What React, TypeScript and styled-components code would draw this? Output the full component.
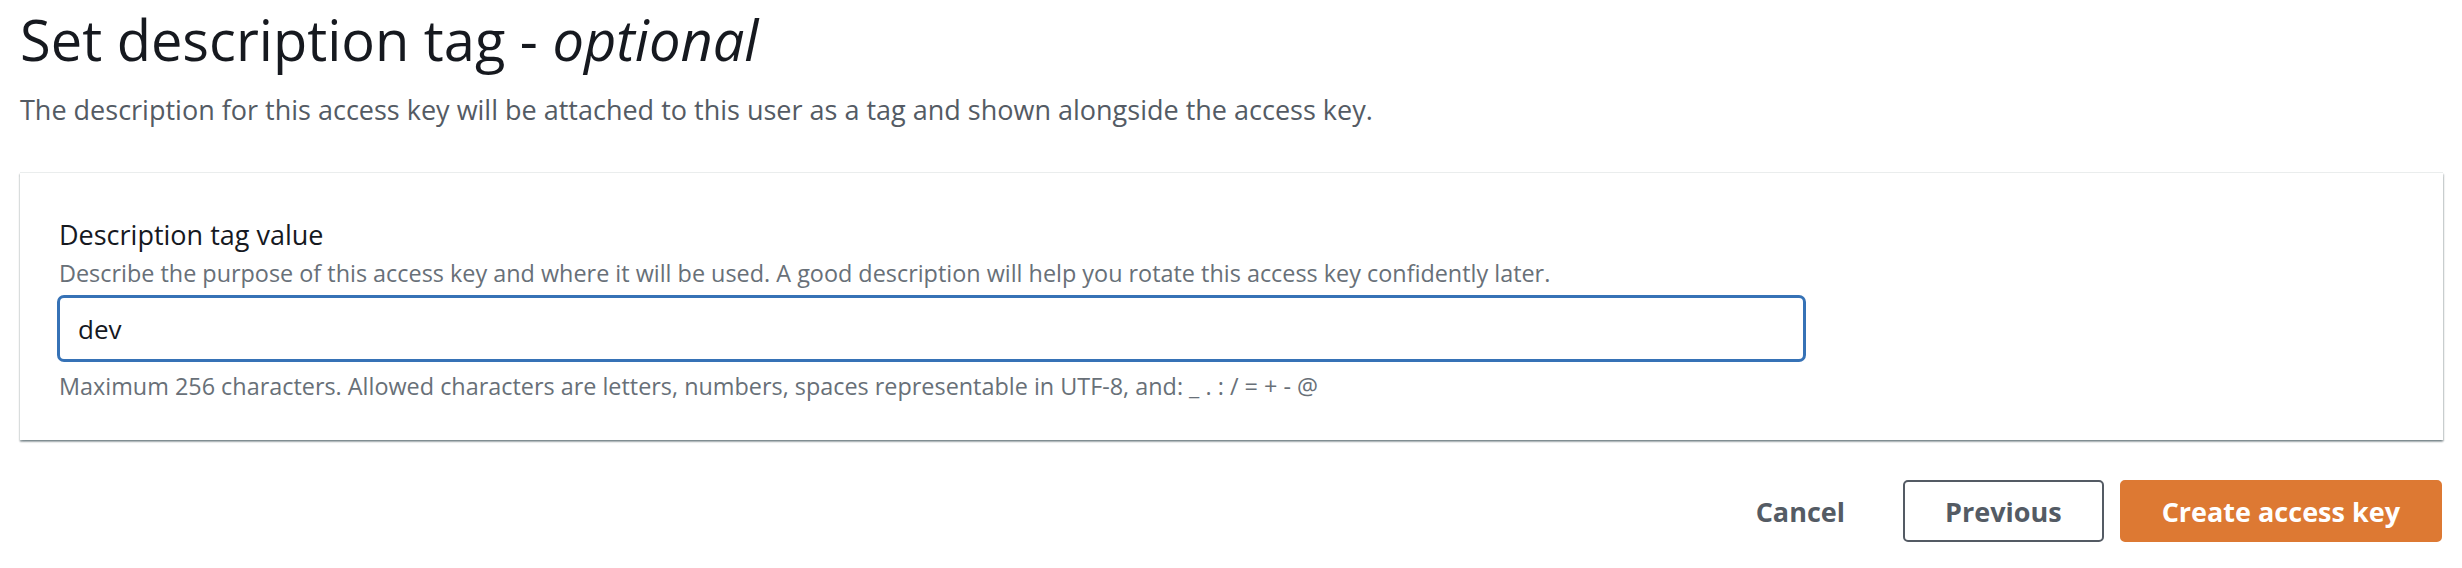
import styled, { createGlobalStyle } from "styled-components";

const GlobalStyle = createGlobalStyle`
  body {
    margin: 0;
    background: #ffffff;
    font-family: "Open Sans", "Noto Sans", Arial, sans-serif;
    color: #16191f;
  }
`;

const Page = styled.div`
  display: flex;
  flex-direction: column;
  padding: 7px 19px 0 20px;
`;

const Header = styled.div`
  display: flex;
  flex-direction: column;
`;

const Title = styled.h1`
  margin: 0;
  font-size: 56px;
  line-height: 64px;
  font-weight: 400;
  color: #16191f;

  em {
    font-style: italic;
  }
`;

const Subtitle = styled.p`
  margin: 21px 0 0;
  font-size: 27px;
  line-height: 36px;
  color: #545b64;
`;

const Container = styled.div`
  margin-top: 44px;
  background: #ffffff;
  border-top: 1px solid #eaeded;
  box-shadow: 0 2px 1.5px 0 rgba(0, 28, 36, 0.3),
    1.5px 1.5px 1.5px 0 rgba(0, 28, 36, 0.15),
    -1.5px 1.5px 1.5px 0 rgba(0, 28, 36, 0.15);
  padding: 44px 37px 38px;
`;

const Field = styled.div`
  display: flex;
  flex-direction: column;
`;

const Label = styled.label`
  font-size: 27px;
  line-height: 36px;
  color: #16191f;
  padding-left: 2px;
`;

const Hint = styled.div<{ $gap?: number }>`
  margin-top: ${(p) => p.$gap ?? 0}px;
  font-size: 23.4px;
  line-height: 32px;
  color: #687078;
  padding-left: 2px;
`;

const Input = styled.input`
  box-sizing: border-box;
  margin-top: 6px;
  width: 100%;
  max-width: 1749px;
  height: 67px;
  padding: 0 18px;
  border: 3px solid #3672b6;
  border-radius: 7px;
  outline: none;
  font-family: inherit;
  font-size: 26px;
  color: #16191f;
  background: #ffffff;
`;

const Actions = styled.div`
  display: flex;
  justify-content: flex-end;
  align-items: center;
  gap: 16px;
  margin-top: 40px;
  padding-right: 1px;
`;

const Button = styled.button<{ $variant: "link" | "normal" | "primary" }>`
  box-sizing: border-box;
  height: 62px;
  padding: 0 40px;
  border-radius: 5px;
  font-family: inherit;
  font-size: 27px;
  font-weight: 700;
  cursor: pointer;
  border: 2px solid
    ${(p) =>
      p.$variant === "normal"
        ? "#545b64"
        : p.$variant === "primary"
        ? "#dd7933"
        : "transparent"};
  background: ${(p) => (p.$variant === "primary" ? "#dd7933" : "#ffffff")};
  color: ${(p) => (p.$variant === "primary" ? "#ffffff" : "#545b64")};
`;

export default function App() {
  return (
    <>
      <GlobalStyle />
      <Page>
        <Header>
          <Title>
            Set description tag - <em>optional</em>
          </Title>
          <Subtitle>
            The description for this access key will be attached to this user
            as a tag and shown alongside the access key.
          </Subtitle>
        </Header>
        <Container>
          <Field>
            <Label>Description tag value</Label>
            <Hint $gap={4}>
              Describe the purpose of this access key and where it will be used.
              A good description will help you rotate this access key
              confidently later.
            </Hint>
            <Input defaultValue="dev" />
            <Hint $gap={8}>
              Maximum 256 characters. Allowed characters are letters, numbers,
              spaces representable in UTF-8, and: _ . : / = + - @
            </Hint>
          </Field>
        </Container>
        <Actions>
          <Button $variant="link">Cancel</Button>
          <Button $variant="normal">Previous</Button>
          <Button $variant="primary">Create access key</Button>
        </Actions>
      </Page>
    </>
  );
}
